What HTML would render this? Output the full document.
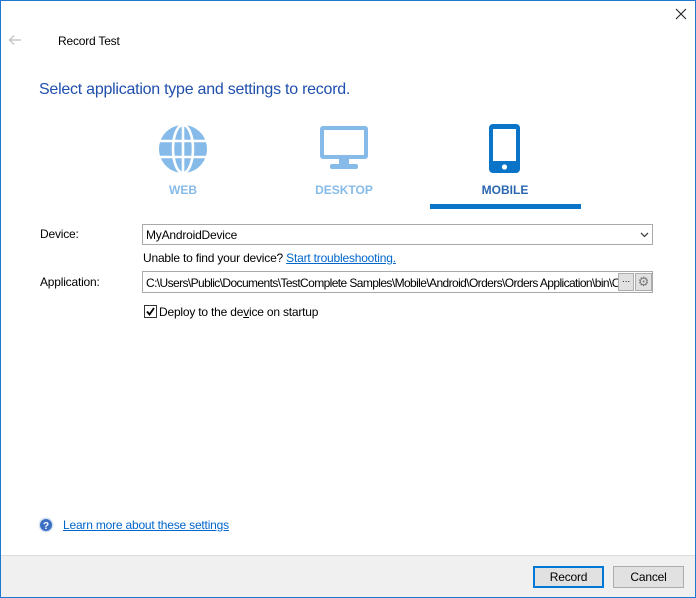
<!DOCTYPE html>
<html><head><style>
*{box-sizing:border-box;margin:0;padding:0}
body{width:696px;height:598px;position:relative;font-family:"Liberation Sans",sans-serif;font-size:12px;color:#000;background:#fff;overflow:hidden;letter-spacing:-0.2px}
.frame{position:absolute;left:0;top:0;width:696px;height:598px;border:1px solid #1e78d0;}
.a{position:absolute;white-space:nowrap}
.lbl{font-weight:bold;font-size:12px;text-align:center;width:150px;letter-spacing:0}
.box{position:absolute;border:1px solid #a9a9a9;background:#fff}
.btn{position:absolute;height:22px;background:#e1e1e1;border:1px solid #adadad;text-align:center;line-height:20px;font-size:12px}
a{color:#0066cc;text-decoration:underline}
</style></head><body>
<div class="frame"></div>
<svg class="a" style="left:8px;top:34px" width="14" height="12"><path d="M13 6H2M6 1.5L1.5 6L6 10.5" stroke="#c8c8c8" stroke-width="1.5" fill="none"/></svg>
<svg class="a" style="left:675px;top:8px" width="12" height="12"><path d="M1 1L11 11M11 1L1 11" stroke="#222" stroke-width="1.1"/></svg>
<div class="a" style="left:58px;top:34px;font-size:12px">Record Test</div>
<div class="a" style="left:39px;top:81px;font-size:16px;color:#1f4fad;letter-spacing:-0.25px">Select application type and settings to record.</div>

<svg class="a" style="left:158px;top:124px" width="50" height="50" viewBox="0 0 50 50">
<circle cx="25" cy="25" r="24" fill="#86bbe9"/>
<g stroke="#fff" stroke-width="2.6" fill="none">
<ellipse cx="25" cy="25" rx="10" ry="24"/><path d="M25 1V49M1 17H49M1 33H49"/></g></svg>
<div class="a lbl" style="left:108px;top:183px;color:#86bbe9">WEB</div>

<svg class="a" style="left:319px;top:125px" width="50" height="46" viewBox="0 0 50 46">
<rect x="1" y="1" width="48" height="33" rx="3" fill="#86bbe9"/><rect x="5" y="5" width="40" height="25" fill="#fff"/>
<rect x="20" y="34" width="10" height="6" fill="#86bbe9"/><rect x="11" y="39" width="28" height="5" rx="2" fill="#86bbe9"/></svg>
<div class="a lbl" style="left:269px;top:183px;color:#86bbe9">DESKTOP</div>

<svg class="a" style="left:489px;top:124px" width="32" height="50" viewBox="0 0 32 50">
<rect x="0" y="0" width="31" height="49" rx="4" fill="#0a74c9"/><rect x="4" y="5" width="23" height="32" fill="#fff"/><circle cx="15.5" cy="43" r="2.6" fill="#fff"/></svg>
<div class="a lbl" style="left:430px;top:183px;color:#2a66b0">MOBILE</div>
<div class="a" style="left:430px;top:204px;width:151px;height:5px;background:#0a74c9"></div>

<div class="a" style="left:40px;top:227px">Device:</div>
<div class="box" style="left:142px;top:224px;width:511px;height:21px"></div>
<div class="a" style="left:146px;top:228px">MyAndroidDevice</div>
<svg class="a" style="left:640px;top:232px" width="9" height="6"><path d="M1 1L4.5 4.5L8 1" stroke="#444" stroke-width="1.3" fill="none"/></svg>
<div class="a" style="left:143px;top:251px">Unable to find your device? <a>Start troubleshooting.</a></div>

<div class="a" style="left:40px;top:275px">Application:</div>
<div class="box" style="left:142px;top:271px;width:511px;height:22px"></div>
<div class="a" style="left:146px;top:276px;width:472px;overflow:hidden;letter-spacing:-0.6px">C:\Users\Public\Documents\TestComplete Samples\Mobile\Android\Orders\Orders Application\bin\C</div>
<div class="a" style="left:618px;top:273px;width:16px;height:18px;background:#e1e1e1;border:1px solid #adadad;text-align:center;font-size:9px;line-height:14px">···</div>
<div class="a" style="left:635px;top:273px;width:17px;height:18px;background:#e1e1e1;border:1px solid #adadad;color:#777;text-align:center;font-size:13px;line-height:16px">⚙</div>

<div class="a" style="left:144px;top:305px;width:13px;height:13px;border:1px solid #333;background:#fff"></div>
<svg class="a" style="left:145px;top:306px" width="11" height="11"><path d="M2 5.5L4.5 8.5L9 2" stroke="#000" stroke-width="1.8" fill="none"/></svg>
<div class="a" style="left:159px;top:305px">Deploy to the de<u>v</u>ice on startup</div>

<svg class="a" style="left:38px;top:517px" width="16" height="16"><circle cx="8" cy="8" r="7.5" fill="#d8e2f2"/><circle cx="8" cy="8" r="6" fill="#3a6fc4"/><text x="8" y="12" font-size="10" font-weight="bold" fill="#fff" text-anchor="middle" font-family="Liberation Sans">?</text></svg>
<div class="a" style="left:63px;top:518px"><a>Learn more about these settings</a></div>

<div class="a" style="left:1px;top:555px;width:694px;height:42px;background:#f0f0f0;border-top:1px solid #dcdcdc"></div>
<div class="btn" style="left:533px;top:566px;width:71px;border:2px solid #0078d7;line-height:18px">Record</div>
<div class="btn" style="left:613px;top:566px;width:71px">Cancel</div>
</body></html>
